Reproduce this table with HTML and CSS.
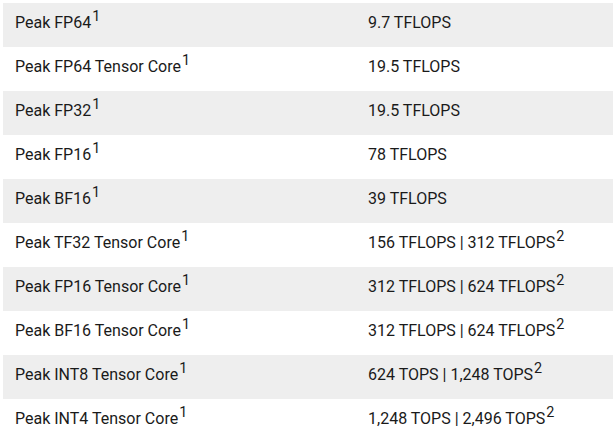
FILE: index.html
```html
<!DOCTYPE html>
<html>
<head>
<meta charset="utf-8">
<link rel="stylesheet" href="styles.css">
</head>
<body>
<div class="specs">
  <div class="row"><div class="label">Peak FP64<sup>1</sup></div><div class="value">9.7 TFLOPS</div></div>
  <div class="row"><div class="label">Peak FP64 Tensor Core<sup>1</sup></div><div class="value">19.5 TFLOPS</div></div>
  <div class="row"><div class="label">Peak FP32<sup>1</sup></div><div class="value">19.5 TFLOPS</div></div>
  <div class="row"><div class="label">Peak FP16<sup>1</sup></div><div class="value">78 TFLOPS</div></div>
  <div class="row"><div class="label">Peak BF16<sup>1</sup></div><div class="value">39 TFLOPS</div></div>
  <div class="row"><div class="label">Peak TF32 Tensor Core<sup>1</sup></div><div class="value">156 TFLOPS | 312 TFLOPS<sup>2</sup></div></div>
  <div class="row"><div class="label">Peak FP16 Tensor Core<sup>1</sup></div><div class="value">312 TFLOPS | 624 TFLOPS<sup>2</sup></div></div>
  <div class="row"><div class="label">Peak BF16 Tensor Core<sup>1</sup></div><div class="value">312 TFLOPS | 624 TFLOPS<sup>2</sup></div></div>
  <div class="row"><div class="label">Peak INT8 Tensor Core<sup>1</sup></div><div class="value">624 TOPS | 1,248 TOPS<sup>2</sup></div></div>
  <div class="row"><div class="label">Peak INT4 Tensor Core<sup>1</sup></div><div class="value">1,248 TOPS | 2,496 TOPS<sup>2</sup></div></div>
</div>
</body>
</html>
```
FILE: styles.css
```css
html, body {
  margin: 0;
  padding: 0;
  background: #fff;
}
body {
  padding: 3px 1px 0 3px;
  font-family: Roboto, "Liberation Sans", sans-serif;
  font-size: 16px;
  font-weight: 400;
  color: #1a1a1a;
}
.specs {
  display: flex;
  flex-direction: column;
}
.row {
  display: grid;
  grid-template-columns: 353px 1fr;
  height: 44px;
  align-items: center;
}
.row:nth-child(odd) {
  background: #eeeeee;
}
.label, .value {
  padding: 0 12px 5px;
  white-space: nowrap;
}
sup {
  font-size: 0.9em;
  line-height: 0;
  vertical-align: 0.5em;
  margin-left: 1px;
}
```
